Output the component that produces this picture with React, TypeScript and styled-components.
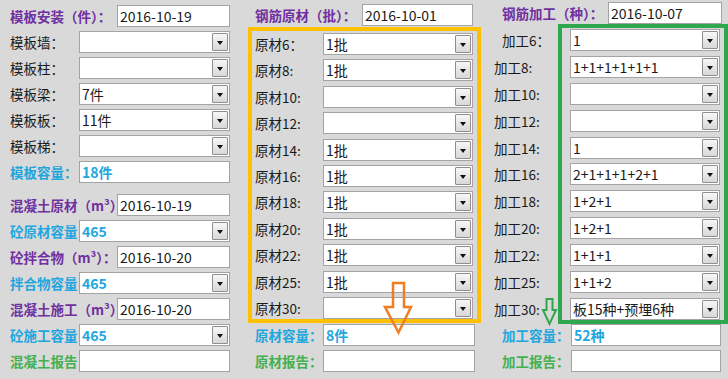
import React from 'react';
import styled, { createGlobalStyle } from 'styled-components';

type Tone = 'plain' | 'purple' | 'blue' | 'green';

const TONES: Record<Tone, string> = {
  plain: '#1a1a1a',
  purple: '#7030a0',
  blue: '#22a6de',
  green: '#44b04f',
};

const GlobalStyle = createGlobalStyle`
  html, body {
    margin: 0;
    padding: 0;
    background: #d9d9d9;
  }
  body {
    font-family: "Noto Sans CJK SC", "Microsoft YaHei", sans-serif;
    font-size: 13.5px;
    color: #1a1a1a;
  }
`;

const Page = styled.div`
  display: flex;
  align-items: flex-start;
  width: 728px;
  height: 379px;
  padding-left: 10px;
  box-sizing: border-box;
  overflow: hidden;
`;

const Column = styled.div<{ $width: number; $top: number; $left?: number }>`
  position: relative;
  display: flex;
  flex-direction: column;
  flex: none;
  width: ${p => p.$width}px;
  margin-left: ${p => p.$left || 0}px;
  padding-top: ${p => p.$top}px;
`;

const Row = styled.div<{ $mt?: number }>`
  display: flex;
  align-items: center;
  height: 22px;
  margin-top: ${p => p.$mt || 0}px;
`;

const Label = styled.span<{ $tone?: Tone; $width: number; $indent?: number }>`
  flex: none;
  width: ${p => p.$width}px;
  padding-left: ${p => p.$indent || 0}px;
  box-sizing: border-box;
  white-space: nowrap;
  line-height: 22px;
  color: ${p => TONES[p.$tone || 'plain']};
  font-weight: ${p => (p.$tone && p.$tone !== 'plain' ? 700 : 400)};
`;

const Box = styled.div<{ $width?: number }>`
  display: flex;
  align-items: center;
  height: 22px;
  box-sizing: border-box;
  ${p => (p.$width ? `width: ${p.$width}px; flex: none;` : 'flex: 1;')}
  background: #fff;
  border: 1px solid #a3a3a3;
  padding-left: 2px;
`;

const Value = styled.span<{ $tone?: Tone }>`
  flex: 1;
  white-space: nowrap;
  overflow: hidden;
  font-size: 14px;
  line-height: 20px;
  color: ${p => TONES[p.$tone || 'plain']};
  font-weight: ${p => (p.$tone === 'blue' ? 700 : 400)};
`;

const DropButton = styled.span`
  flex: none;
  display: flex;
  align-items: center;
  justify-content: center;
  width: 16px;
  height: 18px;
  margin-right: 1px;
  box-sizing: border-box;
  border: 1px solid #8e8e8e;
  border-radius: 1px;
  background: linear-gradient(#f7f7f7, #d8d8d8);

  &::after {
    content: '';
    margin-top: 2px;
    border-left: 3.5px solid transparent;
    border-right: 3.5px solid transparent;
    border-top: 4px solid #111;
  }
`;

const FrameSection = styled.div<{ $color: string; $mt: number; $height: number }>`
  display: flex;
  flex-direction: column;
  justify-content: space-between;
  height: ${p => p.$height}px;
  margin-top: ${p => p.$mt}px;
  box-sizing: border-box;
  border: 4px solid ${p => p.$color};
`;

const YellowFrame = styled(FrameSection)`
  padding: 2px 4px 0 3px;
`;

const SplitRow = styled.div`
  display: flex;
`;

const LabelStack = styled.div`
  display: flex;
  flex-direction: column;
  justify-content: space-between;
  width: 65px;
  height: 300px;
  padding: 5px 0 4px;
  box-sizing: border-box;
`;

const GreenFrame = styled(FrameSection)`
  width: 170px;
  padding: 1px 4px 0 8px;
`;

const Arrow = styled.svg<{ $x: number; $y: number }>`
  position: absolute;
  left: ${p => p.$x}px;
  top: ${p => p.$y}px;
  overflow: visible;
`;

function Field({ value = '', tone, select, width }: { value?: string; tone?: Tone; select?: boolean; width?: number }) {
  return (
    <Box $width={width}>
      <Value $tone={tone}>{value}</Value>
      {select && <DropButton />}
    </Box>
  );
}

const banRows: [string, string][] = [
  ['模板墙：', ''],
  ['模板柱：', ''],
  ['模板梁：', '7件'],
  ['模板板：', '11件'],
  ['模板梯：', ''],
];

const rawRows: [string, string][] = [
  ['原材6：', '1批'],
  ['原材8:', '1批'],
  ['原材10:', ''],
  ['原材12:', ''],
  ['原材14:', '1批'],
  ['原材16:', '1批'],
  ['原材18:', '1批'],
  ['原材20:', '1批'],
  ['原材22:', '1批'],
  ['原材25:', '1批'],
  ['原材30:', ''],
];

const workRows: [string, string, number][] = [
  ['加工6：', '1', 9],
  ['加工8:', '1+1+1+1+1+1', 1],
  ['加工10:', '', 1],
  ['加工12:', '', 1],
  ['加工14:', '1', 1],
  ['加工16:', '2+1+1+1+2+1', 1],
  ['加工18:', '1+2+1', 1],
  ['加工20:', '1+2+1', 1],
  ['加工22:', '1+1+1', 1],
  ['加工25:', '1+1+2', 1],
  ['加工30:', '板15种+预埋6种', 1],
];

export default function App() {
  return (
    <>
      <GlobalStyle />
      <Page>
        {/* 模板 / 混凝土 */}
        <Column $width={220} $top={5}>
          <Row>
            <Label $tone="purple" $width={107}>模板安装（件）：</Label>
            <Field value="2016-10-19" />
          </Row>
          {banRows.map(([label, value]) => (
            <Row key={label} $mt={4}>
              <Label $width={69}>{label}</Label>
              <Field value={value} select />
            </Row>
          ))}
          <Row $mt={4}>
            <Label $tone="blue" $width={69}>模板容量：</Label>
            <Field value="18件" tone="blue" />
          </Row>
          <Row $mt={11}>
            <Label $tone="purple" $width={107}>混凝土原材（m³）</Label>
            <Field value="2016-10-19" />
          </Row>
          <Row $mt={4}>
            <Label $tone="blue" $width={69}>砼原材容量</Label>
            <Field value="465" tone="blue" select />
          </Row>
          <Row $mt={4}>
            <Label $tone="purple" $width={107}>砼拌合物（m³）：</Label>
            <Field value="2016-10-20" />
          </Row>
          <Row $mt={4}>
            <Label $tone="blue" $width={69}>拌合物容量</Label>
            <Field value="465" tone="blue" select />
          </Row>
          <Row $mt={4}>
            <Label $tone="purple" $width={107}>混凝土施工（m³）</Label>
            <Field value="2016-10-20" />
          </Row>
          <Row $mt={4}>
            <Label $tone="blue" $width={69}>砼施工容量</Label>
            <Field value="465" tone="blue" select />
          </Row>
          <Row $mt={4}>
            <Label $tone="green" $width={69}>混凝土报告</Label>
            <Field />
          </Row>
        </Column>

        {/* 钢筋原材 */}
        <Column $width={233} $top={4} $left={18}>
          <Row>
            <Label $tone="purple" $width={114} $indent={7}>钢筋原材（批）：</Label>
            <Field value="2016-10-01" width={111} />
          </Row>
          <YellowFrame $color="#ffc000" $mt={1} $height={296}>
            {rawRows.map(([label, value]) => (
              <Row key={label}>
                <Label $width={68}>{label}</Label>
                <Field value={value} select />
              </Row>
            ))}
          </YellowFrame>
          <Row $mt={1}>
            <Label $tone="blue" $width={75} $indent={7}>原材容量：</Label>
            <Field value="8件" tone="blue" width={152} />
          </Row>
          <Row $mt={4}>
            <Label $tone="green" $width={75} $indent={7}>原材报告：</Label>
            <Field width={152} />
          </Row>
          <Arrow $x={136} $y={282} width="28" height="52" viewBox="0 0 28 52">
            <path d="M9 1 H20 V25 H27 L14.5 50.5 L1 25 H9 Z" fill="none" stroke="#ef7d22" strokeWidth="2.5" strokeLinejoin="miter" />
          </Arrow>
        </Column>

        {/* 钢筋加工 */}
        <Column $width={235} $top={2} $left={12}>
          <Row>
            <Label $tone="purple" $width={115} $indent={9}>钢筋加工（种）：</Label>
            <Field value="2016-10-07" width={114} />
          </Row>
          <SplitRow>
            <LabelStack>
              {workRows.map(([label, , indent]) => (
                <Row key={label}>
                  <Label $width={65} $indent={indent}>{label}</Label>
                </Row>
              ))}
            </LabelStack>
            <GreenFrame $color="#30a64e" $mt={0} $height={300}>
              {workRows.map(([label, value]) => (
                <Row key={label}>
                  <Field value={value} select />
                </Row>
              ))}
            </GreenFrame>
          </SplitRow>
          <Row>
            <Label $tone="blue" $width={78} $indent={9}>加工容量：</Label>
            <Field value="52种" tone="blue" width={150} />
          </Row>
          <Row $mt={4}>
            <Label $tone="green" $width={78} $indent={9}>加工报告：</Label>
            <Field width={150} />
          </Row>
          <Arrow $x={49} $y={298} width="15" height="27" viewBox="0 0 15 27">
            <path d="M4.5 1 H10.5 V12 H14 L7.5 26 L1 12 H4.5 Z" fill="none" stroke="#30a64e" strokeWidth="2" />
          </Arrow>
        </Column>
      </Page>
    </>
  );
}
